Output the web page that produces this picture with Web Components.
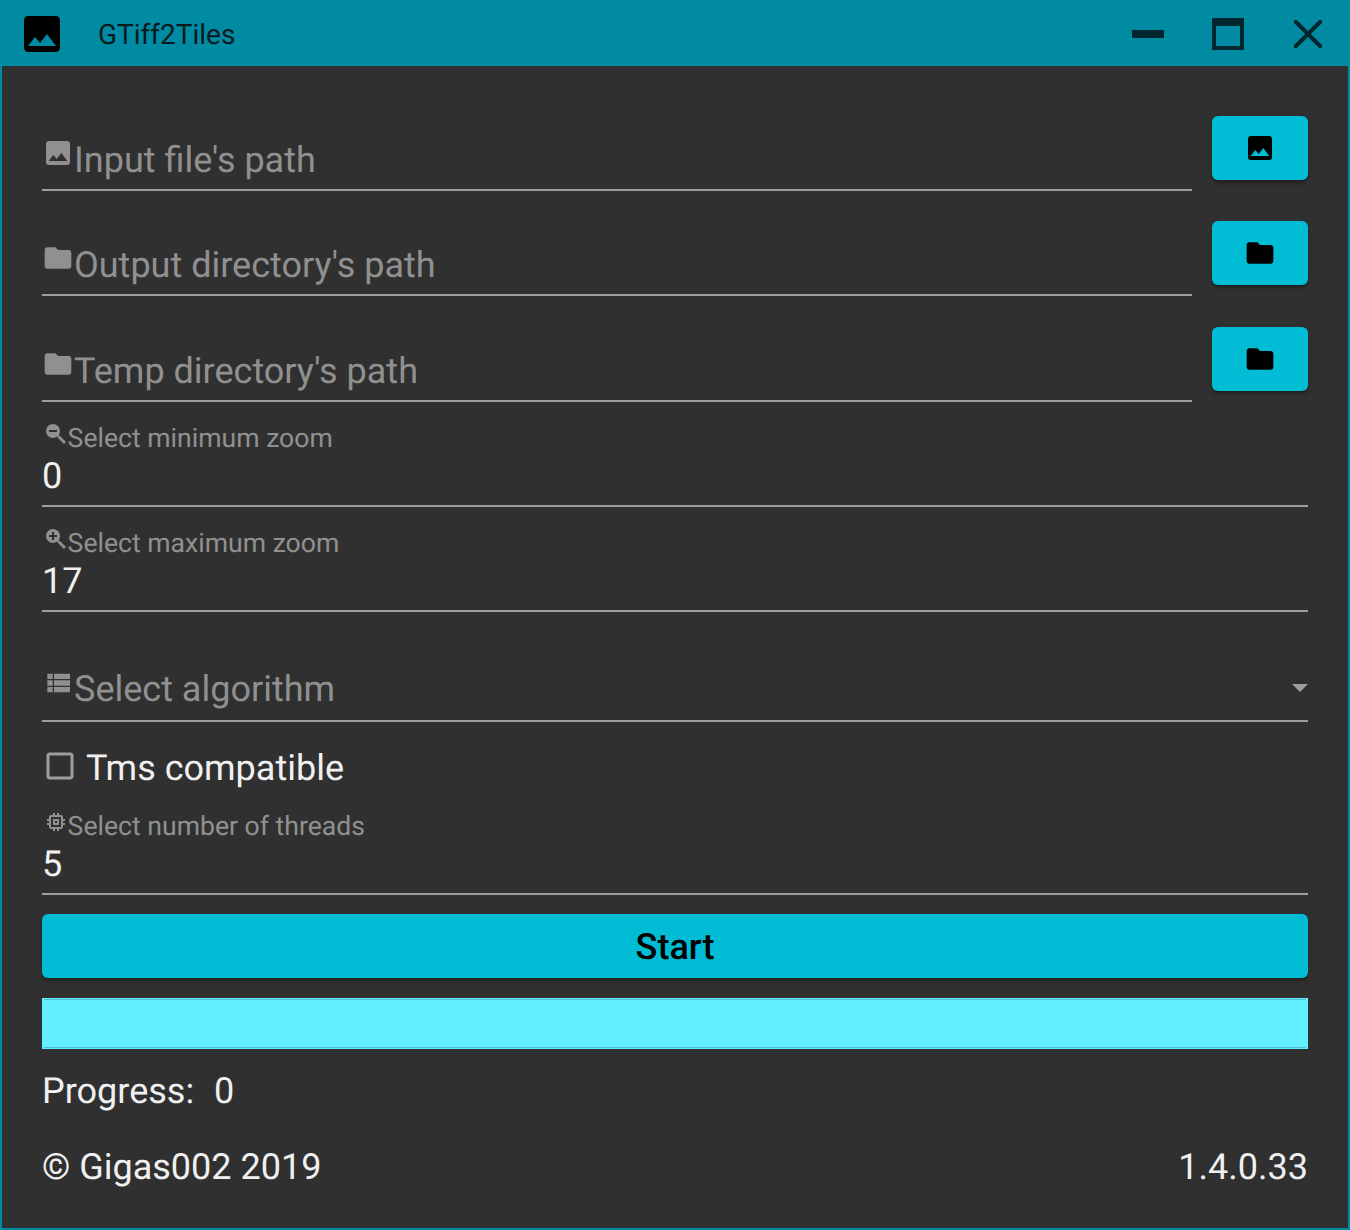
<!DOCTYPE html>
<html><head><meta charset="utf-8"><title>GTiff2Tiles</title>
<style>
html,body{margin:0;padding:0;background:#303030;}
body{font-family:Roboto,"Liberation Sans",sans-serif;text-rendering:geometricPrecision;}
</style></head><body>
<app-window>
  <title-bar slot="bar">GTiff2Tiles</title-bar>
  <path-row label="Input file's path" icon="image"></path-row>
  <path-row label="Output directory's path" icon="folder" gap="30"></path-row>
  <path-row label="Temp directory's path" icon="folder" gap="31"></path-row>
  <value-field label="Select minimum zoom" icon="zoomout" value="0" h="105"></value-field>
  <value-field label="Select maximum zoom" icon="zoomin" value="17" h="105"></value-field>
  <select-field label="Select algorithm"></select-field>
  <check-field label="Tms compatible"></check-field>
  <value-field label="Select number of threads" icon="memory" value="5" h="85"></value-field>
  <start-button>Start</start-button>
  <progress-strip></progress-strip>
  <foot-row style="--h:72px;--top:6px"><span>Progress: <span style="margin-left:11px">0</span></span></foot-row>
  <foot-row style="--h:76px;--top:2px"><span>© Gigas002 2019</span><span>1.4.0.33</span></foot-row>
</app-window>
<script>
const P={
image:'M21 19V5c0-1.1-.9-2-2-2H5c-1.1 0-2 .9-2 2v14c0 1.1.9 2 2 2h14c1.1 0 2-.9 2-2zM8.5 13.5l2.5 3.01L14.5 12l4.5 6H5l3.5-4.5z',
folder:'M10 4H4c-1.1 0-1.99.9-1.99 2L2 18c0 1.1.9 2 2 2h16c1.1 0 2-.9 2-2V8c0-1.1-.9-2-2-2h-8l-2-2z',
zoomout:'M9,2A7,7 0 0,1 16,9C16,10.57 15.5,12 14.61,13.19L15.41,14H16L22,20L20,22L14,16V15.41L13.19,14.61C12,15.5 10.57,16 9,16A7,7 0 0,1 2,9A7,7 0 0,1 9,2M5,8V10H13V8H5Z',
zoomin:'M9,2A7,7 0 0,1 16,9C16,10.57 15.5,12 14.61,13.19L15.41,14H16L22,20L20,22L14,16V15.41L13.19,14.61C12,15.5 10.57,16 9,16A7,7 0 0,1 2,9A7,7 0 0,1 9,2M8,5V8H5V10H8V13H10V10H13V8H10V5H8Z',
memory:'M15 9H9v6h6V9zm-2 4h-2v-2h2v2zm8-2V9h-2V7c0-1.1-.9-2-2-2h-2V3h-2v2h-2V3H9v2H7c-1.1 0-2 .9-2 2v2H3v2h2v2H3v2h2v2c0 1.1.9 2 2 2h2v2h2v-2h2v2h2v-2h2c1.1 0 2-.9 2-2v-2h2v-2h-2v-2h2zm-4 6H7V7h10v10z',
list:'M4 14h4v-4H4v4zm0 5h4v-4H4v4zM4 9h4V5H4v4zm5 5h12v-4H9v4zm0 5h12v-4H9v4zM9 5v4h12V5H9z',
box:'M19 5v14H5V5h14m0-2H5c-1.1 0-2 .9-2 2v14c0 1.1.9 2 2 2h14c1.1 0 2-.9 2-2V5c0-1.1-.9-2-2-2z',
min:'M20,14H4V10H20',
max:'M4,4H20V20H4V4M6,8V18H18V8H6Z',
close:'M13.46,12L19,17.54V19H17.54L12,13.46L6.46,19H5V17.54L10.54,12L5,6.46V5H6.46L12,10.54L17.54,5H19V6.46L13.46,12Z'
};
const svg=(n,s,st='')=>`<svg width="${s}" height="${s}" viewBox="0 0 24 24" fill="currentColor" style="flex:none;display:block;${st}"><path d="${P[n]}"/></svg>`;
class Base extends HTMLElement{
  constructor(){super();this.attachShadow({mode:'open'});}
  a(n,d=''){return this.getAttribute(n)??d;}
}
customElements.define('app-window',class extends Base{connectedCallback(){this.shadowRoot.innerHTML=`<style>
:host{display:flex;flex-direction:column;width:1350px;height:1230px;box-sizing:border-box;background:#303030;border:solid #008ba3;border-width:0 2px 2px;color:#e9e9e9;}
.bar{margin:0 -2px;}
main{flex:1;display:flex;flex-direction:column;padding:50px 40px 0;min-height:0;}
</style><div class="bar"><slot name="bar"></slot></div><main><slot></slot></main>`;}});
customElements.define('title-bar',class extends Base{connectedCallback(){this.shadowRoot.innerHTML=`<style>
:host{display:flex;height:66px;align-items:center;padding:2px 18px 0;background:#008ba3;font:400 28px/1 Roboto,sans-serif;color:#000;box-sizing:border-box;}
.t{margin-left:32px;flex:1;color:#0a1a1e;padding-top:1px;}
.c{display:flex;gap:32px;color:rgba(0,0,0,.72);}
button{all:unset;display:block;width:48px;height:48px;}
</style>${svg('image',48)}<div class="t"><slot></slot></div>
<div class="c"><button aria-label="Minimize">${svg('min',48)}</button><button aria-label="Maximize">${svg('max',48)}</button><button aria-label="Close">${svg('close',48)}</button></div>`;}});
const lineCss=`border-bottom:2px solid #9e9e9e;box-sizing:border-box;`;
customElements.define('path-row',class extends Base{connectedCallback(){this.shadowRoot.innerHTML=`<style>
:host{display:flex;gap:20px;height:75px;margin-top:${this.a('gap','0')}px;font-family:Roboto,sans-serif;}
.f{flex:1;display:flex;${lineCss}height:75px;color:#909090;font-size:36px;}
.f svg{margin-top:21px;}
.f span{line-height:42px;margin-top:23px;}
button{all:unset;display:flex;align-items:center;justify-content:center;width:96px;height:64px;border-radius:6px;background:#00bcd4;color:#000;box-shadow:0 3px 3px -2px rgba(0,0,0,.3),0 3px 5px rgba(0,0,0,.2);}
</style><div class="f">${svg(this.a('icon'),32)}<span>${this.a('label')}</span></div><button aria-label="Browse">${svg(this.a('icon'),32)}</button>`;}});
customElements.define('value-field',class extends Base{connectedCallback(){this.shadowRoot.innerHTML=`<style>
:host{display:flex;flex-direction:column;justify-content:flex-end;height:${this.a('h','105')}px;font-family:Roboto,sans-serif;${lineCss}}
.l{display:flex;color:#909090;font-size:26.6px;line-height:32px;padding-left:2px;}
.l span{margin-left:-.4px;transform:translateY(.6px);}
.v{font-size:36px;line-height:42px;color:#f0f0f0;margin:1px 0 8px;}
</style><div class="l">${svg(this.a('icon'),24)}<span>${this.a('label')}</span></div><div class="v">${this.a('value')}</div>`;}});
customElements.define('select-field',class extends Base{connectedCallback(){this.shadowRoot.innerHTML=`<style>
:host{display:flex;height:110px;font-family:Roboto,sans-serif;position:relative;color:#909090;font-size:36px;${lineCss}}
svg{margin-top:55px;}
span{margin-top:56px;line-height:42px;}
i{position:absolute;right:0;top:72px;width:0;height:0;border:8px solid transparent;border-top-color:#9e9e9e;border-bottom:0;}
</style>${svg('list',32)}<span>${this.a('label')}</span><i></i>`;}});
customElements.define('check-field',class extends Base{connectedCallback(){this.shadowRoot.innerHTML=`<style>
:host{display:flex;height:88px;font-family:Roboto,sans-serif;font-size:36px;color:#f0f0f0;}
svg{margin-top:26px;color:#9e9e9e;}
span{margin-top:25px;margin-left:8px;line-height:42px;}
</style>${svg('box',36)}<span>${this.a('label')}</span>`;}});
customElements.define('start-button',class extends Base{connectedCallback(){this.shadowRoot.innerHTML=`<style>
:host{display:flex;align-items:center;justify-content:center;height:64px;margin-top:19px;padding-top:1px;box-sizing:border-box;border-radius:6px;background:#00bcd4;color:#000;font:500 36px/1 Roboto,sans-serif;box-shadow:0 3px 3px -2px rgba(0,0,0,.3),0 3px 5px rgba(0,0,0,.2);}
</style><slot></slot>`;}});
customElements.define('progress-strip',class extends Base{connectedCallback(){this.shadowRoot.innerHTML=`<style>
:host{display:block;height:51px;margin-top:20px;box-sizing:border-box;padding:1px 2px;background:#62efff;}
div{height:100%;box-sizing:border-box;border:solid #55bfd0;border-width:1px 0;}
</style><div></div>`;}});
customElements.define('foot-row',class extends Base{connectedCallback(){this.shadowRoot.innerHTML=`<style>
:host{display:flex;justify-content:space-between;align-items:center;height:var(--h);margin-top:var(--top,0);font:400 36px/42px Roboto,sans-serif;color:#f0f0f0;}
</style><slot></slot>`;}});
</script></body></html>
